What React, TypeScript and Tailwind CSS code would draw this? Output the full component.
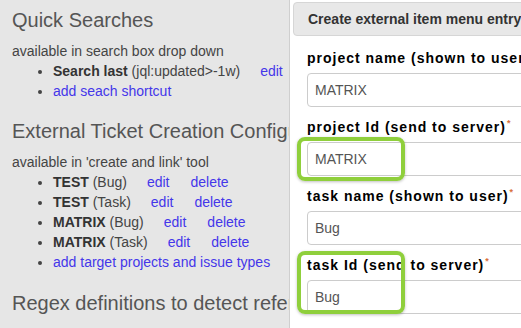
import React from "react";

const LINK = "text-[#4436ea]";

interface Ticket {
  key: string;
  type: string;
}

const TICKETS: Ticket[] = [
  { key: "TEST", type: "Bug" },
  { key: "TEST", type: "Task" },
  { key: "MATRIX", type: "Bug" },
  { key: "MATRIX", type: "Task" },
];

function Field({ label, value }: { label: string; value: string }): React.ReactElement {
  return (
    <div className="mb-[10px]">
      <div className="h-[20px] leading-[20px] text-[14px] font-bold text-black tracking-[1px] whitespace-nowrap mb-[5px]">
        {label}
        <span className="text-[9px] align-top leading-[12px] text-[#d9703a] ml-[1px]">*</span>
      </div>
      <div className="h-[34px] w-[320px] border border-[#cccccc] rounded-[4px] bg-white px-[7px] flex items-center text-[14px] text-[#555]">
        {value}
      </div>
    </div>
  );
}

export default function App(): React.ReactElement {
  return (
    <div
      className="w-[521px] h-[328px] flex overflow-hidden bg-white"
      style={{ fontFamily: '"Liberation Sans", Arial, sans-serif' }}
    >
      {/* Left: config page behind the dialog */}
      <div className="w-[290px] shrink-0 bg-[#e6e6e6] border-r border-[#cfcfcf] pl-[12px] pt-[9px] overflow-hidden whitespace-nowrap text-[14px] leading-[20px] text-[#444]">
        <h2 className="text-[20px] leading-[22px] text-[#555] mb-[10px]">Quick Searches</h2>
        <p>available in search box drop down</p>
        <ul className="list-disc pl-[41px]">
          <li>
            <b className="text-[#333]">Search last</b> (jql:updated&gt;-1w)
            <span className={`${LINK} ml-[20px]`}>edit</span>
          </li>
          <li>
            <span className={LINK}>add seach shortcut</span>
          </li>
        </ul>

        <h2 className="text-[20px] leading-[22px] text-[#555] mt-[19px] mb-[10px]">
          External Ticket Creation Configuration
        </h2>
        <p>available in 'create and link' tool</p>
        <ul className="list-disc pl-[41px]">
          {TICKETS.map((t, i) => (
            <li key={i}>
              <b className="text-[#333]">{t.key}</b> ({t.type})
              <span className={`${LINK} ml-[20px]`}>edit</span>
              <span className={`${LINK} ml-[21px]`}>delete</span>
            </li>
          ))}
          <li>
            <span className={LINK}>add target projects and issue types</span>
          </li>
        </ul>

        <h2 className="text-[20px] leading-[22px] text-[#555] mt-[20px]">
          Regex definitions to detect references
        </h2>
      </div>

      {/* Right: dialog */}
      <div className="relative flex-1 overflow-hidden bg-white">
        <div className="mt-[2px] ml-[3px] w-[300px] h-[34px] bg-[#e8e8e8] border border-[#d6d6d6] rounded-[4px] pl-[14px] flex items-center text-[14px] font-bold text-[#333] whitespace-nowrap">
          Create external item menu entry
        </div>

        <div className="pl-[17px] mt-[12px]">
          <Field label="project name (shown to user)" value="MATRIX" />
          <Field label="project Id (send to server)" value="MATRIX" />
          <Field label="task name (shown to user)" value="Bug" />
          <Field label="task Id (send to server)" value="Bug" />
        </div>

        {/* highlight marks */}
        <div className="absolute left-[7px] top-[137px] w-[108px] h-[44px] border-[4px] border-[#8fcf3c] rounded-[8px] shadow-[0_1px_3px_rgba(0,0,0,0.25)]" />
        <div className="absolute left-[7px] top-[251px] w-[108px] h-[63px] border-[4px] border-[#8fcf3c] rounded-[8px] shadow-[0_1px_3px_rgba(0,0,0,0.25)]" />
      </div>
    </div>
  );
}
